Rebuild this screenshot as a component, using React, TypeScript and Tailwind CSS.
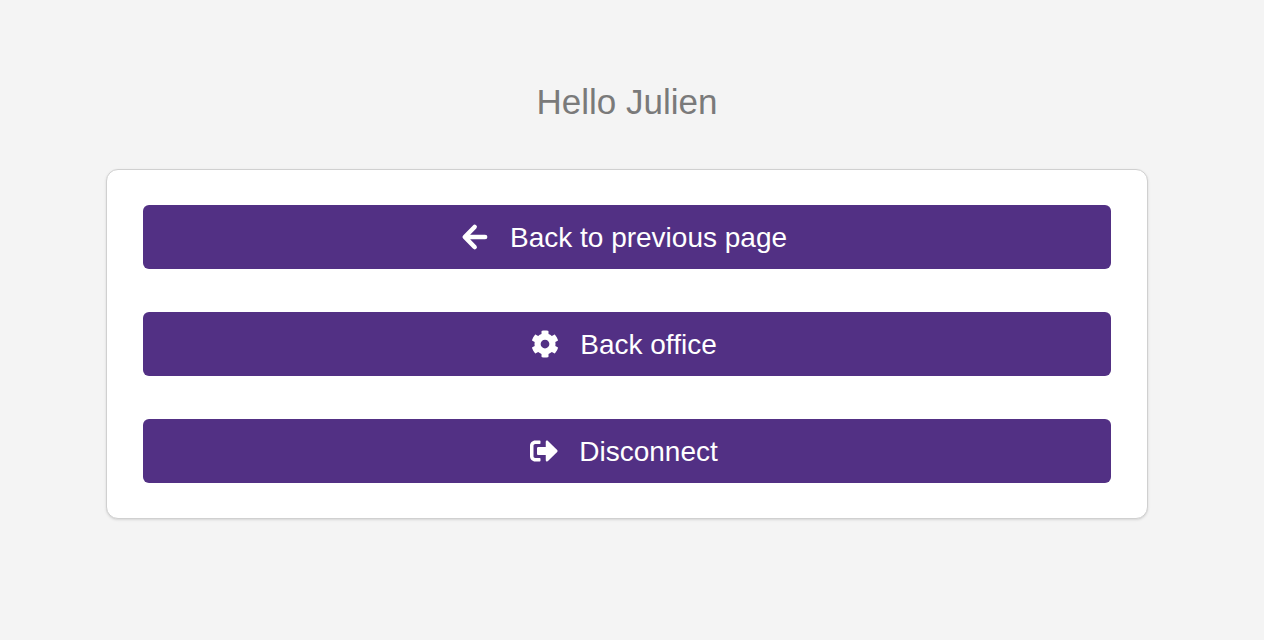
import { FaCog, FaSignOutAlt } from "react-icons/fa";
import type { ReactNode } from "react";

function ArrowLeft() {
  return (
    <svg
      viewBox="0 0 28 28"
      className="size-7"
      fill="none"
      stroke="currentColor"
      strokeWidth="4.6"
      strokeLinecap="round"
      strokeLinejoin="round"
      aria-hidden="true"
    >
      <path d="M13.6 4 3.8 14l9.8 10M4.5 14h19.6" />
    </svg>
  );
}

function Action({ icon, label }: { icon: ReactNode; label: string }) {
  return (
    <button
      type="button"
      className="flex h-16 w-full items-center justify-center gap-[21px] rounded-md bg-[#523084] pr-1.5 pb-px text-[28px] leading-10 text-white"
    >
      {icon}
      <span className="pt-0.5">{label}</span>
    </button>
  );
}

export default function App() {
  return (
    <div className="min-h-screen bg-[#f4f4f4] px-[106px] pt-20 pr-[116px] font-['Liberation_Sans',Arial,sans-serif]">
      <h1 className="text-center text-[35px] leading-11 text-[#7a7a7a]">Hello Julien</h1>
      <main className="mt-[45px] flex flex-col gap-[43px] rounded-xl border border-[#d0d0d0] bg-white px-9 py-[35px] shadow-sm">
        <Action icon={<ArrowLeft />} label="Back to previous page" />
        <Action icon={<FaCog size={28} />} label="Back office" />
        <Action icon={<FaSignOutAlt size={28} />} label="Disconnect" />
      </main>
    </div>
  );
}
